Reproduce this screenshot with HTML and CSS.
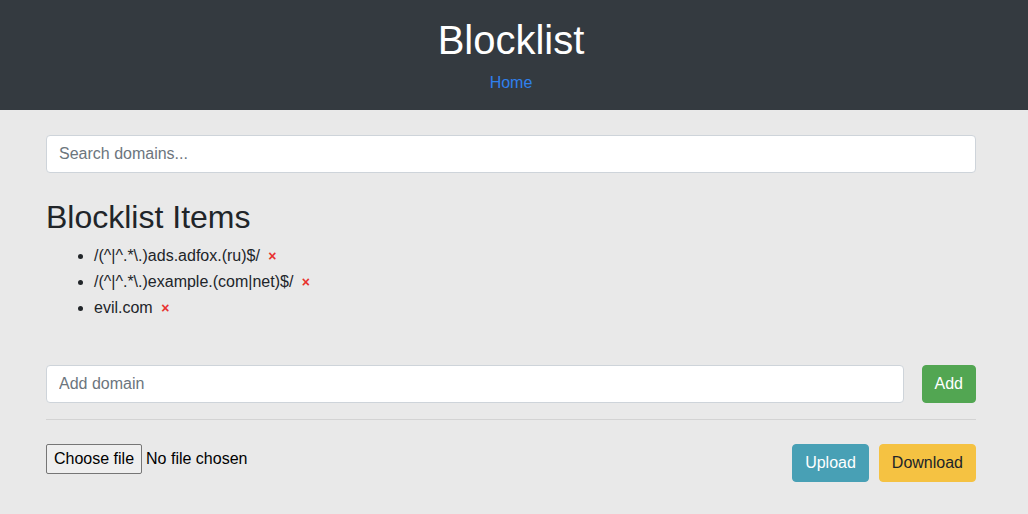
FILE: index.html
```html
<!DOCTYPE html>
<html lang="en">
<head>
<meta charset="utf-8">
<title>Blocklist</title>
<link rel="stylesheet" href="styles.css">
</head>
<body>
<header class="site-header">
  <h1 class="site-title">Blocklist</h1>
  <nav class="site-nav"><a href="#" class="nav-link">Home</a></nav>
</header>
<main class="container">
  <input class="form-control" type="text" placeholder="Search domains...">
  <h2 class="section-title">Blocklist Items</h2>
  <ul class="item-list">
    <li>/(^|^.*\.)ads.adfox.(ru)$/ <span class="remove">×</span></li>
    <li>/(^|^.*\.)example.(com|net)$/ <span class="remove">×</span></li>
    <li>evil.com <span class="remove">×</span></li>
  </ul>
  <form class="add-row">
    <input class="form-control" type="text" placeholder="Add domain">
    <button type="button" class="btn btn-success">Add</button>
  </form>
  <hr class="divider">
  <div class="file-row">
    <label class="file-picker">
      <input type="file" class="file-input">
      <span class="file-button">Choose file</span>
      <span class="file-name">No file chosen</span>
    </label>
    <div class="file-actions">
      <button type="button" class="btn btn-info">Upload</button>
      <button type="button" class="btn btn-warning">Download</button>
    </div>
  </div>
</main>
</body>
</html>
```
FILE: styles.css
```css
* { box-sizing: border-box; }
html, body { margin: 0; padding: 0; }
body {
  background: #e9e9e9;
  color: #212529;
  font-family: "Liberation Sans", Arial, Helvetica, sans-serif;
  font-size: 16px;
  line-height: 1.5;
}
.site-header {
  background: #343a40;
  height: 110px;
  padding: 16px 6px 0 0;
  text-align: center;
}
.site-title {
  margin: 0;
  color: #fff;
  font-size: 40px;
  font-weight: 400;
  line-height: 48px;
}
.site-nav { margin-top: 7px; line-height: 24px; }
.nav-link { color: #2f80ed; text-decoration: none; }
.container {
  margin: 0 52px 0 46px;
  padding-top: 25px;
}
.form-control {
  display: block;
  width: 100%;
  height: 38px;
  padding: 6px 12px;
  font: inherit;
  color: #495057;
  background: #fff;
  border: 1px solid #ced4da;
  border-radius: 4px;
  outline: none;
}
.form-control::placeholder { color: #6c757d; }
.section-title {
  margin: 25px 0 7px;
  font-size: 32px;
  font-weight: 400;
  line-height: 38px;
}
.item-list {
  margin: 0;
  padding-left: 48px;
}
.item-list li { line-height: 26px; }
.remove {
  color: #e8322f;
  font-weight: 700;
  font-size: 14px;
  margin-left: 4px;
  cursor: pointer;
}
.add-row {
  display: flex;
  gap: 18px;
  margin: 44px 0 0;
}
.add-row .form-control { flex: 1; }
.divider {
  margin: 16px 0 24px;
  border: 0;
  border-top: 1px solid #d3d3d3;
}
.file-row {
  display: flex;
  justify-content: space-between;
  align-items: flex-start;
}
.file-picker {
  display: flex;
  align-items: center;
  gap: 4px;
  color: #000;
  font-size: 16px;
  cursor: pointer;
}
.file-input { display: none; }
.file-button {
  display: inline-flex;
  align-items: center;
  height: 30px;
  padding: 0 7px;
  background: #efefef;
  border: 1px solid #767676;
  border-radius: 2px;
}
.file-actions { display: flex; gap: 10px; }
.btn {
  display: inline-block;
  height: 38px;
  padding: 6px 12px;
  font: inherit;
  line-height: 24px;
  border: 1px solid transparent;
  border-radius: 4px;
  cursor: pointer;
}
.btn-success { background: #52a652; border-color: #52a652; color: #fff; }
.btn-info { background: #48a0b5; border-color: #48a0b5; color: #fff; }
.btn-warning { background: #f5c242; border-color: #f5c242; color: #212529; }
```
